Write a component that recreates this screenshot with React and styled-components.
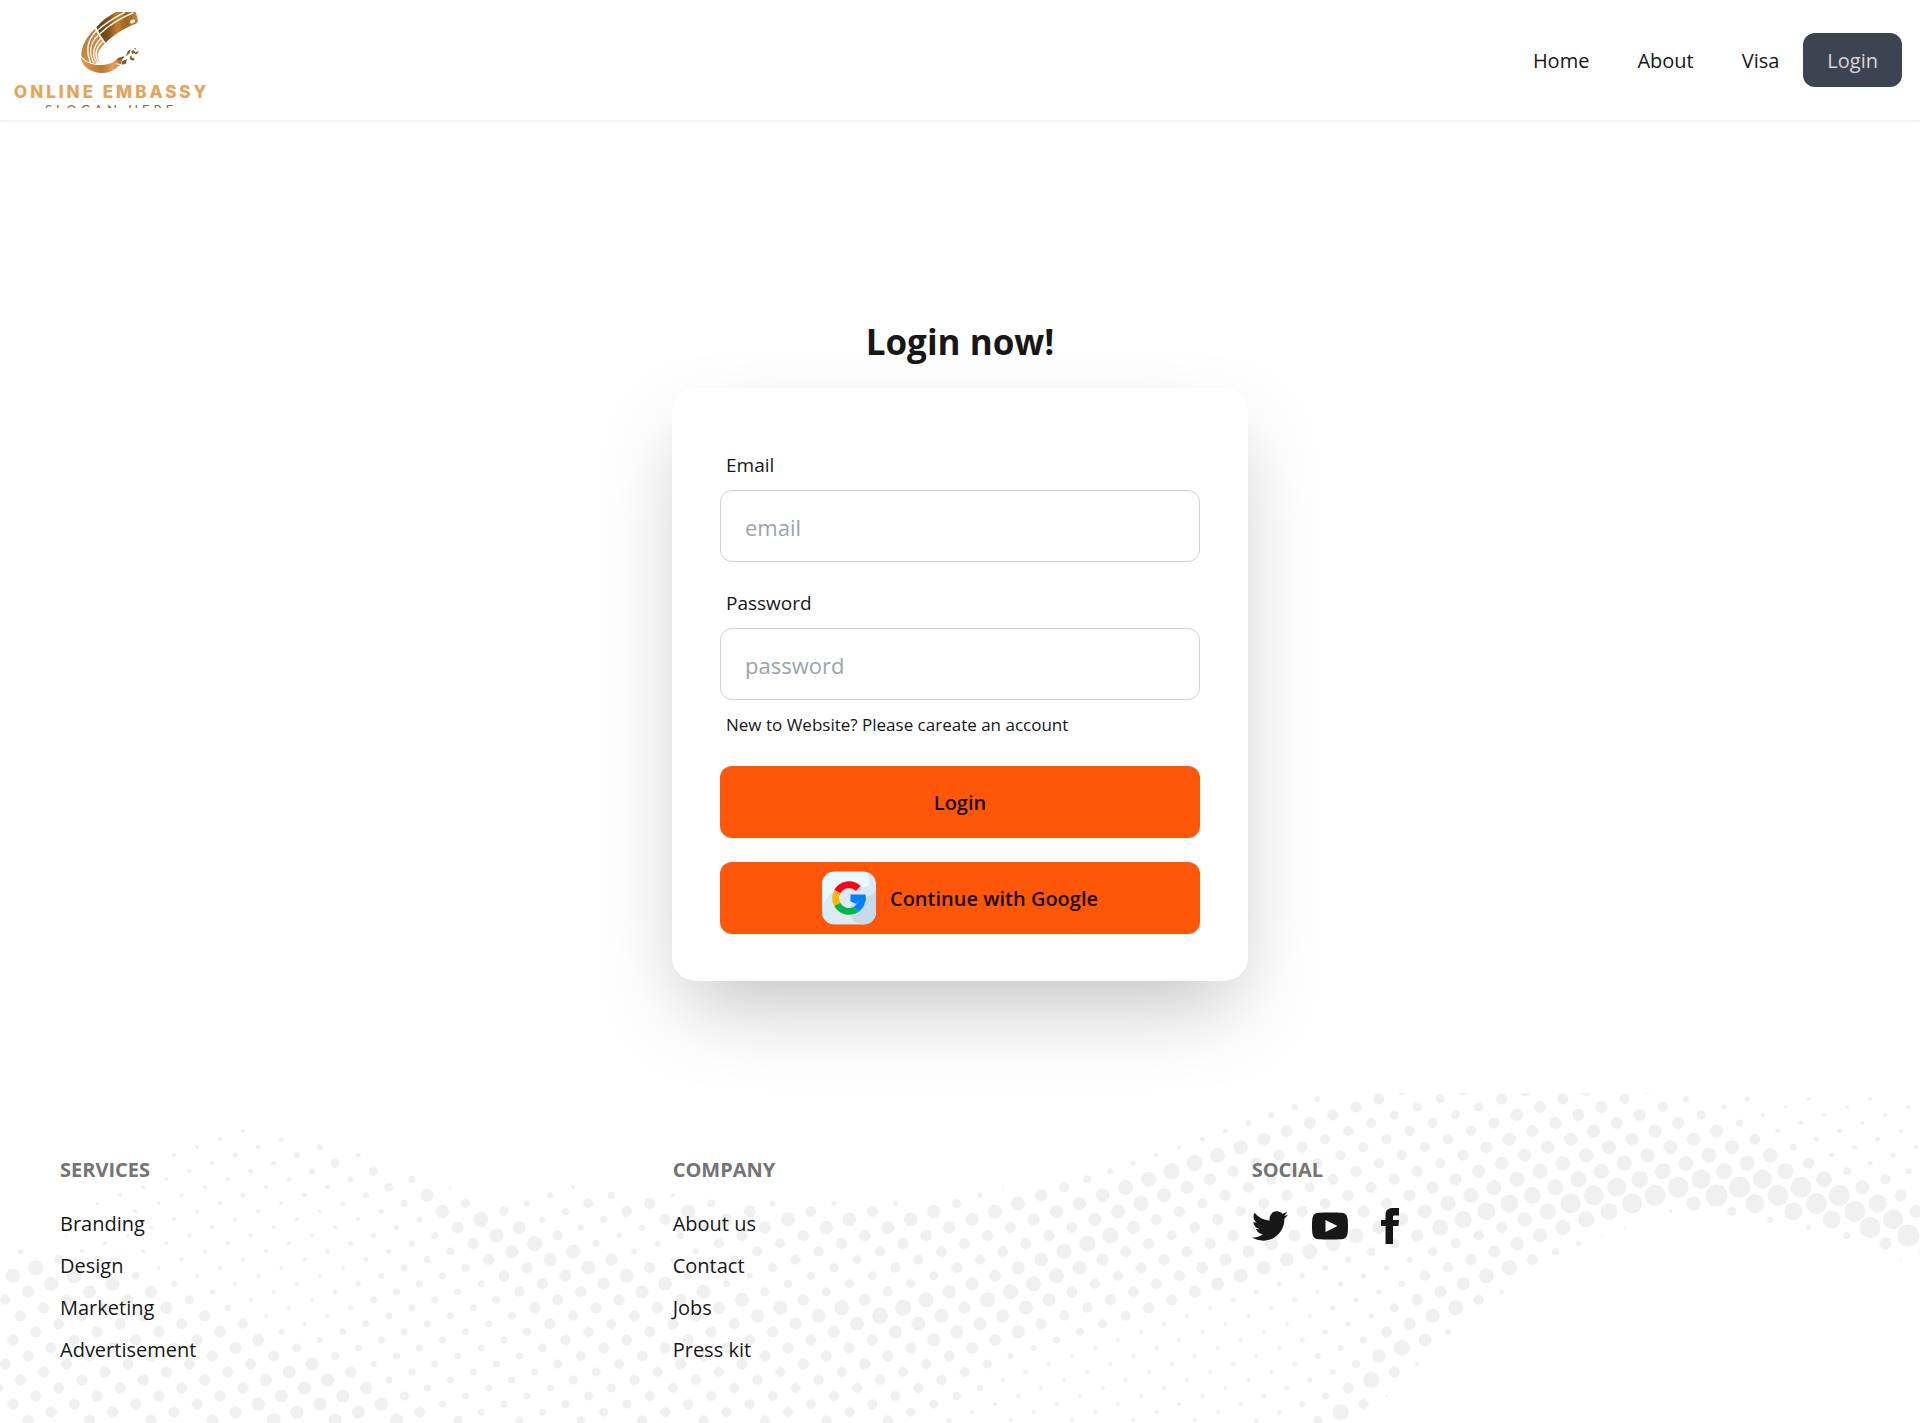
import React from "react";
import styled, { createGlobalStyle } from "styled-components";

const GlobalStyle = createGlobalStyle`
  *, *::before, *::after { box-sizing: border-box; }
  body {
    margin: 0;
    background: #fff;
    color: #171717;
    font-family: "Open Sans", "Noto Sans", sans-serif;
    font-size: 20px;
    line-height: 28px;
  }
  a { color: inherit; text-decoration: none; }
  button, input { font: inherit; }
`;

const Page = styled.div`
  display: flex;
  flex-direction: column;
  min-height: 100vh;
`;

/* ---------- header ---------- */

const Header = styled.header`
  display: flex;
  align-items: center;
  justify-content: space-between;
  height: 120px;
  padding: 0 18px 0 10px;
  box-shadow: 0 1px 3px rgba(0, 0, 0, 0.08);
`;

const LogoLink = styled.a`
  display: block;
  height: 96px;
  svg { display: block; }
`;

const Nav = styled.nav`
  display: flex;
  align-items: center;
`;

const NavLink = styled.a`
  padding: 14px 24px 12px;
  border-radius: 12px;
  color: ${(p) => (p.$active ? "#d5d6d9" : "inherit")};
  background: ${(p) => (p.$active ? "#3d4451" : "transparent")};
`;

/* ---------- login ---------- */

const Main = styled.main`
  flex: 1;
  display: flex;
  flex-direction: column;
  align-items: center;
  padding: 200px 20px 112px;
`;

const Title = styled.h1`
  margin: 0 0 24px;
  font-size: 35px;
  line-height: 44px;
  font-weight: 700;
`;

const Card = styled.form`
  width: 100%;
  max-width: 576px;
  padding: 57px 48px 47px;
  border-radius: 24px;
  background: #fff;
  box-shadow: 0 36px 84px -15px rgba(0, 0, 0, 0.25);
`;

const Field = styled.div`
  display: flex;
  flex-direction: column;
  & + & { margin-top: 21px; }
`;

const Label = styled.label`
  height: 45px;
  padding: 6px 6px 0;
  font-size: 19px;
`;

const Input = styled.input`
  height: 72px;
  padding: 2px 24px 0;
  border: 1px solid #d1d1d1;
  border-radius: 12px;
  background: #fff;
  color: inherit;
  font-size: 22px;
  &::placeholder { color: #9ca3af; opacity: 1; }
`;

const Hint = styled.a`
  display: block;
  padding: 11px 6px;
  font-size: 17px;
`;

const Actions = styled.div`
  display: flex;
  flex-direction: column;
  gap: 24px;
  margin-top: 16px;
`;

const Button = styled.button`
  display: flex;
  align-items: center;
  justify-content: center;
  gap: 14px;
  height: 72px;
  padding: 0 20px;
  border: 0;
  border-radius: 12px;
  background: #ff570a;
  color: #170600;
  font-weight: 600;
  cursor: pointer;
  span { padding-top: 2px; }
`;

/* ---------- footer ---------- */

const Footer = styled.footer`
  position: relative;
  padding: 63px 60px 57px;
`;

const Pattern = styled.svg`
  position: absolute;
  inset: 0;
  width: 100%;
  height: 100%;
  fill: #f0f0f0;
`;

const Columns = styled.div`
  position: relative;
  display: grid;
  grid-auto-flow: column;
  gap: 24px;
`;

const Column = styled.nav`
  display: flex;
  flex-direction: column;
  align-items: flex-start;
`;

const ColumnTitle = styled.h2`
  margin: 0 0 24px;
  font-size: 20px;
  line-height: 28px;
  font-weight: 700;
  text-transform: uppercase;
  color: #747474;
`;

const Links = styled.div`
  display: flex;
  flex-direction: column;
  gap: 10px;
  line-height: 32px;
`;

const Socials = styled.div`
  display: flex;
  gap: 24px;
  a { display: block; height: 36px; }
  svg { display: block; width: 36px; height: 36px; fill: #171717; }
`;

/* Halftone: each row lists runs of [first column, radii in base 36, half pixels]. */
const HALFTONE = [
  [[21, "488ba64444"]],
  [[21, "6b9bba6544"]],
  [[21, "6b99cca5444"]],
  [[20, "6b99ccc9444"]],
  [[4, "1"], [20, "6caabccc754"]],
  [[2, "141"], [19, "5caaacddd554"]],
  [[2, "1451"], [19, "5daaaddddb55"]],
  [[3, "456"], [19, "4e"], [21, "baacdeee754"]],
  [[2, "4565"], [18, "4fb"], [21, "aabdeeff55"]],
  [[3, "4591"], [18, "5gb"], [21, "aaadefffb5"]],
  [[3, "4569"], [18, "6gb"], [21, "abbdffggg86"]],
  [[1, "144567"], [16, "18fcb"], [21, "bbcfghjjga"]],
  [[2, "444592141"], [16, "2afdb"], [21, "abcfgjllle"]],
  [[1, "44556d167"], [10, "411015"], [16, "ceebb"], [21, "bcfhklmllc"]],
  [[1, "34445796a"], [10, "b86559"], [16, "edfab"], [21, "bbfikkejli"]],
  [[1, "144445d97"], [10, "becbbd"], [16, "edeba"], [21, "bceigh49ild"]],
  [[2, "44446f67"], [10, "bceeed"], [16, "cdbbb"], [21, "bdheg116ik"]],
  [[2, "44445cd6"], [10, "6acddc"], [16, "bbdbb"], [21, "cdgbf2005l"]],
  [[1, "2344457ea"], [10, "57bbbb"], [16, "bbgab"], [21, "cfcae2"], [30, "7m"]],
  [[1, "444456bf7"], [10, "6aabbb"], [16, "bgbbd"], [21, "faad5"], [30, "c"]],
  [[0, "54444558de"], [10, "66aaab"], [16, "bfbbc"], [21, "f89c7"], [31, "9"]],
  [[-1, "69344457bdc"], [10, "48a9aa"], [16, "ecbce"], [21, "66bb"], [30, "2"]],
  [[0, "f5444478be"], [10, "b899ab"], [16, "debce"], [21, "65af"]],
  [[0, "ef844467bc"], [10, "e86899"], [16, "cfabe"], [21, "55af"]],
  [[0, "ee644577bc"], [10, "e7899d"], [16, "fabd5"], [21, "57d"]],
  [[0, "cdc54577ab"], [10, "de99ad"], [16, "fbbc5"], [21, "45c4"]],
  [[0, "abb944778b"], [10, "bcebcf"], [16, "fdbb5"], [21, "55ba"]],
  [[0, "bbc64577bb"], [10, "bcefgc"], [16, "eab44"], [21, "59f"]],
  [[0, "bbbb44778a"], [10, "bbdege"], [16, "daa44"], [21, "45e"]],
  [[-1, "6bbba4777ba"], [10, "bbceed"], [16, "b9444"], [21, "5c1"]],
  [[0, "bbbc67778a"], [10, "bbbcdd"], [16, "d8444"], [21, "5b6"]],
  [[0, "bbbbc6777a"], [10, "bbbbbd"], [16, "c7444"], [21, "57d"]],
  [[0, "bbbc97779b"], [10, "bbbbbc"], [16, "64444"], [21, "6g"]],
  [[0, "bbbbb8777a"], [10, "bbbbbb"], [16, "64444"], [21, "6d"]],
  [[0, "bbbbbd6779"], [10, "abbbba"], [16, "94445"], [21, "584"]],
  [[0, "bbbbdb7779"], [10, "aaaaaa"], [16, "54444"], [21, "6b"]],
  [[0, "bbbbcd7779"], [10, "aaaaaa"], [16, "44444"], [21, "5g"]],
  [[-1, "bbbbbdc7779"], [10, "aaaaa6"], [16, "44445"], [21, "b"]],
  [[0, "bbbbdd9779"], [10, "aaaaa8"], [16, "44445"], [21, "72"]],
  [[0, "bbbbddd778"], [10, "9aaaa9"], [16, "44444"], [21, "6a"]],
  [[0, "bbbcddb779"], [10, "aaaa94"], [16, "44445"], [21, "g"]],
  [[0, "bbbcedd988"], [10, "aaaaa5"], [16, "44445"], [21, "9"]],
];

/* The grid repeats every 61.4px across; each row shifts three eighths to the left. */
const PERIOD = 61.4;
const ROW_STEP = 8.03;

const dots = HALFTONE.flatMap((runs, i) => {
  const row = i - 1;
  const phase = (((28 - row * 23.02) % PERIOD) + PERIOD) % PERIOD;
  return runs.flatMap(([start, sizes]) =>
    [...sizes].map((c, n) => ({
      key: `${row}:${start + n}`,
      x: phase + PERIOD * (start + n),
      y: 6 + row * ROW_STEP,
      r: parseInt(c, 36) / 2,
    }))
  );
}).filter((d) => d.r > 0);

function Halftone() {
  return (
    <Pattern aria-hidden="true">
      {dots.map((d) => (
        <circle key={d.key} cx={d.x} cy={d.y} r={d.r} />
      ))}
    </Pattern>
  );
}

function Logo() {
  return (
    <svg width="200" height="96" viewBox="10 12 200 96" role="img" aria-label="Online Embassy">
      <defs>
        <linearGradient id="cuff" x1="0" y1="0" x2="1" y2="0">
          <stop offset="0" stopColor="#6b3d10" />
          <stop offset="0.3" stopColor="#80501b" />
          <stop offset="0.5" stopColor="#c77e2c" />
          <stop offset="0.72" stopColor="#9b6422" />
          <stop offset="1" stopColor="#c9873c" />
        </linearGradient>
        <linearGradient id="sweep" x1="0" y1="0" x2="1" y2="1">
          <stop offset="0" stopColor="#a8702f" />
          <stop offset="0.55" stopColor="#d08d45" />
          <stop offset="1" stopColor="#dfa05a" />
        </linearGradient>
        <linearGradient id="base" x1="0" y1="0" x2="1" y2="0">
          <stop offset="0" stopColor="#dc9c54" />
          <stop offset="0.5" stopColor="#b97a35" />
          <stop offset="0.75" stopColor="#e0a35e" />
          <stop offset="1" stopColor="#8c5a20" />
        </linearGradient>
      </defs>
      <g transform="scale(0.3333)">
        <path fill="url(#cuff)" d="M289 82C306 62 327 46 352 34L406 34Q411 48 414 62Q414 68 408 71C374 83 344 102 317 128Q300 106 289 82Z" />
        <path fill="none" stroke="#fff" strokeWidth="4" d="M293 91C317 68 345 52 374 37M300 101C326 76 358 56 400 38" />
        <path fill="#fff" d="M391 62L403 57Q406 60 405 66L393 71Q389 68 391 62Z" />
        <path fill="url(#sweep)" d="M284 87C258 112 244 140 244 167C252 180 268 190 289 191L298 184C286 168 296 148 314 131Q297 111 284 87Z" />
        <path fill="none" stroke="#fff" strokeWidth="4" d="M288 94C264 119 255 149 272 188M295 105C272 127 264 157 282 189M302 116C282 136 273 161 291 190M308 124C290 142 281 164 296 187" />
        <path fill="url(#base)" d="M242 172C246 202 276 220 308 219C331 218 349 208 363 192C367 183 362 180 372 171C357 171 349 181 336 188C305 201 262 197 242 172Z" />
        <g fill="#8c5a20">
          <path d="M354 174l20-6 -6 10 -18 4zM366 184l15-7 -3 14 -13 3zM383 154l9-7 -4 14 -8 4zM389 170l7-4 -2 6 10 4 -4 6 -9-3zM394 153l8-3 4 8 -10 4zM406 157l11-4 -6 9 -8 1zM402 146l5-3 1 6zM377 164l8-2 -5 6z" />
        </g>
        <path fill="none" stroke="#fff" strokeWidth="3" d="M347 191l16 3M350 202l17-6" />
      </g>
      <text x="14" y="98" fill="#e5a45b" fontFamily="Inter, sans-serif" fontWeight="800" fontSize="17" letterSpacing="3">ONLINE EMBASSY</text>
      <text x="45" y="115" fill="#8f6a3c" fontFamily="Lato, sans-serif" fontSize="13" letterSpacing="4">SLOGAN HERE</text>
    </svg>
  );
}

function GoogleMark() {
  return (
    <svg width="54" height="54" viewBox="0 0 55 54" aria-hidden="true">
      <defs>
        <clipPath id="tile"><rect width="55" height="54" rx="13" /></clipPath>
      </defs>
      <g clipPath="url(#tile)">
        <rect width="55" height="54" fill="#d9e8f4" />
        <path fill="#e9f9ff" d="M0 0H44Q50 5 48 13C46 18 39 15 35 17C18 13 4 24 0 38Z" />
        <path fill="#dbeaf5" d="M0 38C4 24 18 13 32 17C42 26 55 24 55 14V54H0Z" />
        <path fill="#c8daea" d="M55 19C49 28 26 29 28 42C29 48 34 52 39 54H55Z" />
      </g>
      <g fill="none" strokeWidth="7">
        <path stroke="#ff0014" d="M15.6 20.5A13.5 13.5 0 0 1 37 17.3" />
        <path stroke="#ffb400" d="M15.6 20.5A13.5 13.5 0 0 0 15.6 33.5" />
        <path stroke="#00b446" d="M15.6 33.5A13.5 13.5 0 0 0 34.8 38.5" />
        <path stroke="#0080ff" d="M34.8 38.5A13.5 13.5 0 0 0 40.8 26.9" />
      </g>
      <path fill="#0080ff" d="M29 23.5H44.5V30H37L35 33L29 30.5Z" />
    </svg>
  );
}

const NAV = ["Home", "About", "Visa"];

const COLUMNS = [
  { title: "Services", links: ["Branding", "Design", "Marketing", "Advertisement"] },
  { title: "Company", links: ["About us", "Contact", "Jobs", "Press kit"] },
];

const SOCIALS = [
  {
    name: "Twitter",
    path: "M24 4.557c-.883.392-1.832.656-2.828.775 1.017-.609 1.798-1.574 2.165-2.724-.951.564-2.005.974-3.127 1.195-.897-.957-2.178-1.555-3.594-1.555-3.179 0-5.515 2.966-4.797 6.045-4.091-.205-7.719-2.165-10.148-5.144-1.29 2.213-.669 5.108 1.523 6.574-.806-.026-1.566-.247-2.229-.616-.054 2.281 1.581 4.415 3.949 4.89-.693.188-1.452.232-2.224.084.626 1.956 2.444 3.379 4.6 3.419-2.07 1.623-4.678 2.348-7.29 2.04 2.179 1.397 4.768 2.212 7.548 2.212 9.142 0 14.307-7.721 13.995-14.646.962-.695 1.797-1.562 2.457-2.549z",
  },
  {
    name: "YouTube",
    path: "M19.615 3.184c-3.604-.246-11.631-.245-15.23 0-3.897.266-4.356 2.62-4.385 8.816.029 6.185.484 8.549 4.385 8.816 3.6.245 11.626.246 15.23 0 3.897-.266 4.356-2.62 4.385-8.816-.029-6.185-.484-8.549-4.385-8.816zm-10.615 12.816v-8l8 3.993-8 4.007z",
  },
  {
    name: "Facebook",
    path: "M9 8h-3v4h3v12h5v-12h3.642l.358-4h-4v-1.667c0-.955.192-1.333 1.115-1.333h2.885v-5h-3.808c-3.596 0-5.192 1.583-5.192 4.615v3.385z",
  },
];

export default function App() {
  return (
    <Page>
      <GlobalStyle />
      <Header>
        <LogoLink href="#home"><Logo /></LogoLink>
        <Nav>
          {NAV.map((name) => (
            <NavLink key={name} href={`#${name.toLowerCase()}`}>{name}</NavLink>
          ))}
          <NavLink $active href="#login">Login</NavLink>
        </Nav>
      </Header>

      <Main>
        <Title>Login now!</Title>
        <Card onSubmit={(e) => e.preventDefault()}>
          <Field>
            <Label htmlFor="email">Email</Label>
            <Input id="email" type="email" placeholder="email" />
          </Field>
          <Field>
            <Label htmlFor="password">Password</Label>
            <Input id="password" type="password" placeholder="password" />
          </Field>
          <Hint href="#register">New to Website? Please careate an account</Hint>
          <Actions>
            <Button type="submit"><span>Login</span></Button>
            <Button type="button"><GoogleMark /><span>Continue with Google</span></Button>
          </Actions>
        </Card>
      </Main>

      <Footer>
        <Halftone />
        <Columns>
          {COLUMNS.map((column) => (
            <Column key={column.title} aria-label={column.title}>
              <ColumnTitle>{column.title}</ColumnTitle>
              <Links>
                {column.links.map((link) => (
                  <a key={link} href="#footer">{link}</a>
                ))}
              </Links>
            </Column>
          ))}
          <Column aria-label="Social">
            <ColumnTitle>Social</ColumnTitle>
            <Socials>
              {SOCIALS.map((s) => (
                <a key={s.name} href="#social" aria-label={s.name}>
                  <svg viewBox="0 0 24 24" aria-hidden="true"><path d={s.path} /></svg>
                </a>
              ))}
            </Socials>
          </Column>
        </Columns>
      </Footer>
    </Page>
  );
}
